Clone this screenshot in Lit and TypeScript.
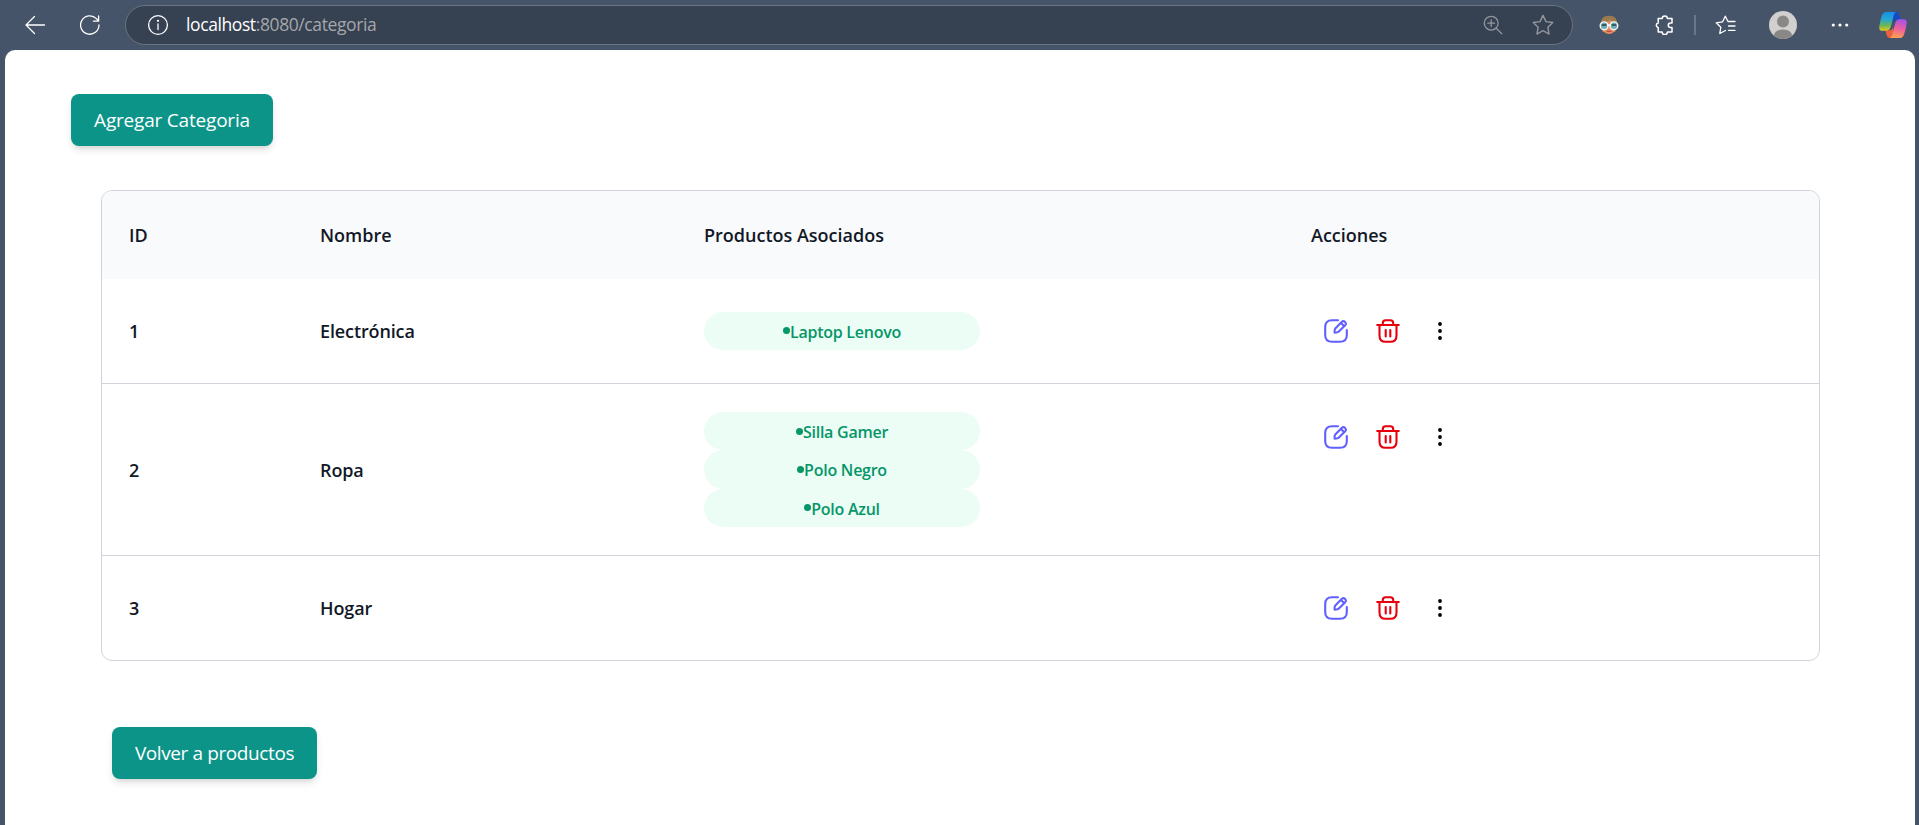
import { LitElement, html, css, svg } from "lit";
import { customElement, property } from "lit/decorators.js";

interface Category {
  id: number;
  name: string;
  products: string[];
}

const CATEGORIES: Category[] = [
  { id: 1, name: "Electrónica", products: ["Laptop Lenovo"] },
  { id: 2, name: "Ropa", products: ["Silla Gamer", "Polo Negro", "Polo Azul"] },
  { id: 3, name: "Hogar", products: [] },
];

const STAR = "M10 1.3 L12.7 6.9 L18.9 7.7 L14.4 12 L15.5 18.2 L10 15.2 L4.5 18.2 L5.6 12 L1.1 7.7 L7.3 6.9 Z";

@customElement("browser-bar")
export class BrowserBar extends LitElement {
  static styles = css`
    :host { display: block; }
    .bar { display: flex; align-items: center; height: 50px; box-sizing: border-box; color: #fff; }
    svg { display: block; flex: none; fill: none; stroke: currentColor; stroke-width: 1.3; stroke-linecap: round; stroke-linejoin: round; }
    .back { margin-left: 24px; }
    .reload { margin-left: 34px; }
    .address { display: flex; align-items: center; box-sizing: border-box; width: 1448px; height: 40px; margin-left: 25px; padding-left: 21px; padding-right: 18px; border: 1px solid #6a7482; border-radius: 20px; background: #364152; }
    .url { flex: 1; margin-left: 17px; padding-bottom: 2px; font-size: 17.5px; letter-spacing: -0.4px; color: #a5a7aa; white-space: nowrap; }
    .host { color: #fff; }
    .dim { color: #92969c; }
    .favorite { margin-left: 29px; }
    .face { margin-left: 26px; }
    .puzzle { margin-left: 36px; }
    .divider { width: 2px; height: 20px; margin-left: 19px; background: #6b7787; }
    .list { margin-left: 19px; }
    .avatar { margin-left: 32px; }
    .more { margin-left: 34px; }
    .copilot { margin-left: 30px; }
  `;

  render() {
    return html`
      <div class="bar">
        <svg class="back" width="22" height="20" viewBox="0 0 22 20"><path d="M10.5 1.5 L2 10 L10.5 18.5 M2 10 H20.5" /></svg>
        <svg class="reload" width="20" height="20" viewBox="0 0 20 20"><path d="M19 10 A9.2 9.2 0 1 1 16.4 3.6 L18.6 6 M18.6 1 V6.2 H13.4" /></svg>
        <div class="address">
          <svg width="22" height="22" viewBox="0 0 22 22"><circle cx="11" cy="11" r="9.4" /><path d="M11 10 V15.5" /><circle cx="11" cy="6.8" r=".5" fill="currentColor" /></svg>
          <div class="url"><span class="host">localhost</span>:8080/categoria</div>
          <svg class="dim" width="20" height="20" viewBox="0 0 20 20"><circle cx="8.2" cy="8.2" r="6.9" /><path d="M13.2 13.2 L18.8 18.8 M8.2 4.8 V11.6 M4.8 8.2 H11.6" /></svg>
          <svg class="dim favorite" width="22" height="22" viewBox="0 0 20 20"><path d=${STAR} /></svg>
        </div>
        <svg class="face" width="20" height="20" viewBox="0 0 20 20">
          <path d="M2 10 Q1 .8 10 .8 Q19 .8 18 10 L16.5 17 H3.5 Z" fill="#9a7b4f" stroke="none" />
          <path d="M3 9 Q5 7.5 8 7 L11 5 Q14 7.5 17 8.5 V12 Q16 19 10 19 Q4 19 3 12 Z" fill="#e8895f" stroke="none" />
          <circle cx="5.1" cy="10.8" r="3.9" fill="#6eaab4" stroke="#f4f7f7" stroke-width="1.4" />
          <circle cx="14.9" cy="10.8" r="3.9" fill="#6eaab4" stroke="#f4f7f7" stroke-width="1.4" />
          <path d="M3.4 10 H6.8 M13.2 10 H16.6" stroke="#29434a" stroke-width="1.5" />
          <path d="M8.9 10.2 H11.1" stroke-width="1.6" />
          <path d="M8.2 16.4 H11.8" stroke="#b35340" />
        </svg>
        <svg class="puzzle" width="20" height="20" viewBox="0 0 20 20"><path d="M3.2 3.5 H7.2 A2.6 2.6 0 0 1 12.4 3.5 H17 V8 H15.6 A2.3 2.3 0 0 0 15.6 12.6 H17 V17 H12.4 A2.6 2.6 0 0 1 7.2 17 H3.2 V12.6 A2.4 2.4 0 0 1 3.2 7.9 Z" stroke-width="1.5" /></svg>
        <div class="divider"></div>
        <svg class="list" width="22" height="20" viewBox="0 0 22 20"><path d="M10.5 15.5 L4.8 18.5 L5.8 12.2 L1.2 7.8 L7.6 6.8 L10.3 1.2 L13 6.5 H20 M13.5 11 H20 M13.5 15.3 H20" /></svg>
        <svg class="avatar" width="28" height="28" viewBox="0 0 28 28">
          <circle cx="14" cy="14" r="14" fill="#d2d0ce" stroke="none" />
          <circle cx="14" cy="10.5" r="6" fill="#8a8886" stroke="none" />
          <path d="M4.8 24.5 Q6 18.5 14 18.5 Q22 18.5 23.2 24.5 Q19 28 14 28 Q9 28 4.8 24.5 Z" fill="#8a8886" stroke="none" />
        </svg>
        <svg class="more" width="18" height="18" viewBox="0 0 18 18"><g fill="currentColor" stroke="none"><circle cx="2.3" cy="9" r="1.6" /><circle cx="9" cy="9" r="1.6" /><circle cx="15.7" cy="9" r="1.6" /></g></svg>
        <svg class="copilot" width="28" height="26" viewBox="0 0 28 26">
          <defs>
            <linearGradient id="cool" x1="0" y1="0" x2="0" y2="1"><stop offset="0" stop-color="#1590ea" /><stop offset=".4" stop-color="#28a7cf" /><stop offset=".7" stop-color="#65b65b" /><stop offset="1" stop-color="#e8c81f" /></linearGradient>
            <linearGradient id="warm" x1=".6" y1="0" x2=".4" y2="1"><stop offset="0" stop-color="#a453ed" /><stop offset=".5" stop-color="#ef5f9d" /><stop offset="1" stop-color="#fda34d" /></linearGradient>
          </defs>
          <g stroke="none">
            <path d="M13 0 H17.5 Q19.6 0 20.2 2.4 L21.5 7.5 H18 Q15 7.5 14 11 Z" fill="#1649c9" />
            <path d="M15 26 H10.5 Q8.4 26 7.8 23.6 L6.5 18.5 H10 Q13 18.5 14 15 Z" fill="#ef6040" />
            <path d="M7.5 0 H18 Q15.4 0 14.8 3 L12 14 Q10.9 18.8 7.4 18.8 H3.2 Q-.4 18.8 .3 14.4 Q1.2 8.5 2.9 3.6 Q4.2 0 7.5 0 Z" fill="url(#cool)" />
            <path d="M20.5 26 H10 Q12.6 26 13.2 23 L16 12 Q17.1 7.2 20.6 7.2 H24.8 Q28.4 7.2 27.7 11.6 Q26.8 17.5 25.1 22.4 Q23.8 26 20.5 26 Z" fill="url(#warm)" />
          </g>
        </svg>
      </div>
    `;
  }
}

@customElement("category-table")
export class CategoryTable extends LitElement {
  @property({ attribute: false }) rows: Category[] = [];

  static styles = css`
    :host { display: block; }
    .table { box-sizing: border-box; width: 1719px; border: 1px solid #d1d5db; border-radius: 11px; overflow: hidden; color: #111827; font-size: 18px; font-weight: 600; }
    .row { display: grid; grid-template-columns: 191px 384px 607px 1fr; align-items: center; box-sizing: border-box; padding-left: 27px; border-bottom: 1px solid #d1d5db; min-height: 105px; }
    .row:last-child { border-bottom: 0; min-height: 104px; }
    .head { min-height: 88px; border-bottom: 0; background: #f9fafb; }
    .row.tall { min-height: 172px; }
    .name { letter-spacing: -0.12px; }
    .products { width: 276px; }
    .pill { display: flex; align-items: center; justify-content: center; height: 38.4px; border-radius: 20px; background: #ecfdf5; color: #059669; font-size: 16px; letter-spacing: -0.25px; white-space: nowrap; }
    .label { padding-top: 2px; }
    .dot { width: 7px; height: 7px; border-radius: 50%; background: #059669; }
    .actions { display: flex; align-items: center; align-self: start; height: 103px; padding-left: 13px; }
    .tall .actions { height: 105px; }
    svg { display: block; flex: none; fill: none; stroke-linecap: round; stroke-linejoin: round; stroke-width: 2.1; }
    .edit { stroke: #615fff; }
    .trash { stroke: #e7000b; margin-left: 28px; }
    .dots { fill: #000; margin-left: 36px; }
  `;

  private actions() {
    return html`
      <div class="actions">
        <svg class="edit" width="24" height="24" viewBox="0 0 24 24">${svg`<path d="M14 1.2 H8 Q1.2 1.2 1.2 8 V16 Q1.2 22.8 8 22.8 H16 Q22.8 22.8 22.8 16 V11" /><path d="M11.3 9.5 L17.9 2.8 Q19.4 1.5 21 2.9 Q22.8 4.6 21.2 6.2 L14.6 12.7 Q13.8 13.5 10.6 13.6 Q10.2 10.6 11.3 9.5 Z M17 4 L20 7" />`}</svg>
        <svg class="trash" width="24" height="24" viewBox="0 0 24 24">${svg`<path d="M1.2 6 H22.8 M3.5 6 V16.5 Q3.5 22.8 9.5 22.8 H14.5 Q20.5 22.8 20.5 16.5 V6 M6.8 6 V4 Q6.8 1.2 9.6 1.2 H14.4 Q17.2 1.2 17.2 4 V6 M9.7 11 V17.5 M14.3 11 V17.5" />`}</svg>
        <svg class="dots" width="8" height="20" viewBox="0 0 8 20"><circle cx="4" cy="3" r="1.9" /><circle cx="4" cy="10" r="1.9" /><circle cx="4" cy="17" r="1.9" /></svg>
      </div>
    `;
  }

  render() {
    return html`
      <div class="table">
        <div class="row head"><span>ID</span><span>Nombre</span><span>Productos Asociados</span><span>Acciones</span></div>
        ${this.rows.map(
          (row) => html`
            <div class="row ${row.products.length > 1 ? "tall" : ""}">
              <span>${row.id}</span>
              <span class="name">${row.name}</span>
              <div class="products">${row.products.map((p) => html`<div class="pill"><i class="dot"></i><span class="label">${p}</span></div>`)}</div>
              ${this.actions()}
            </div>
          `
        )}
      </div>
    `;
  }
}

@customElement("app-root")
export class AppRoot extends LitElement {
  static styles = css`
    :host { display: block; height: 825px; overflow: hidden; background: #455468; font-family: "Open Sans", "Noto Sans", sans-serif; }
    .page { box-sizing: border-box; width: 1910px; height: 775px; margin-left: 5px; padding: 44px 0 0 66px; border-radius: 10px 10px 0 0; background: #fff; }
    .button { display: flex; align-items: center; justify-content: center; width: 202px; height: 52px; padding: 0; border: 0; border-radius: 8px; background: #0d9488; color: #fff; font-family: inherit; font-size: 19px; letter-spacing: -0.2px; white-space: nowrap; box-shadow: 0 5px 8px -1px #0000001a, 0 3px 5px -2px #0000001a; }
    .table { margin: 44px 0 0 30px; }
    .return { width: 205px; margin: 66px 0 0 41px; letter-spacing: -0.4px; }
  `;

  render() {
    return html`
      <browser-bar></browser-bar>
      <main class="page">
        <button class="button">Agregar Categoria</button>
        <category-table class="table" .rows=${CATEGORIES}></category-table>
        <button class="button return">Volver a productos</button>
      </main>
    `;
  }
}
